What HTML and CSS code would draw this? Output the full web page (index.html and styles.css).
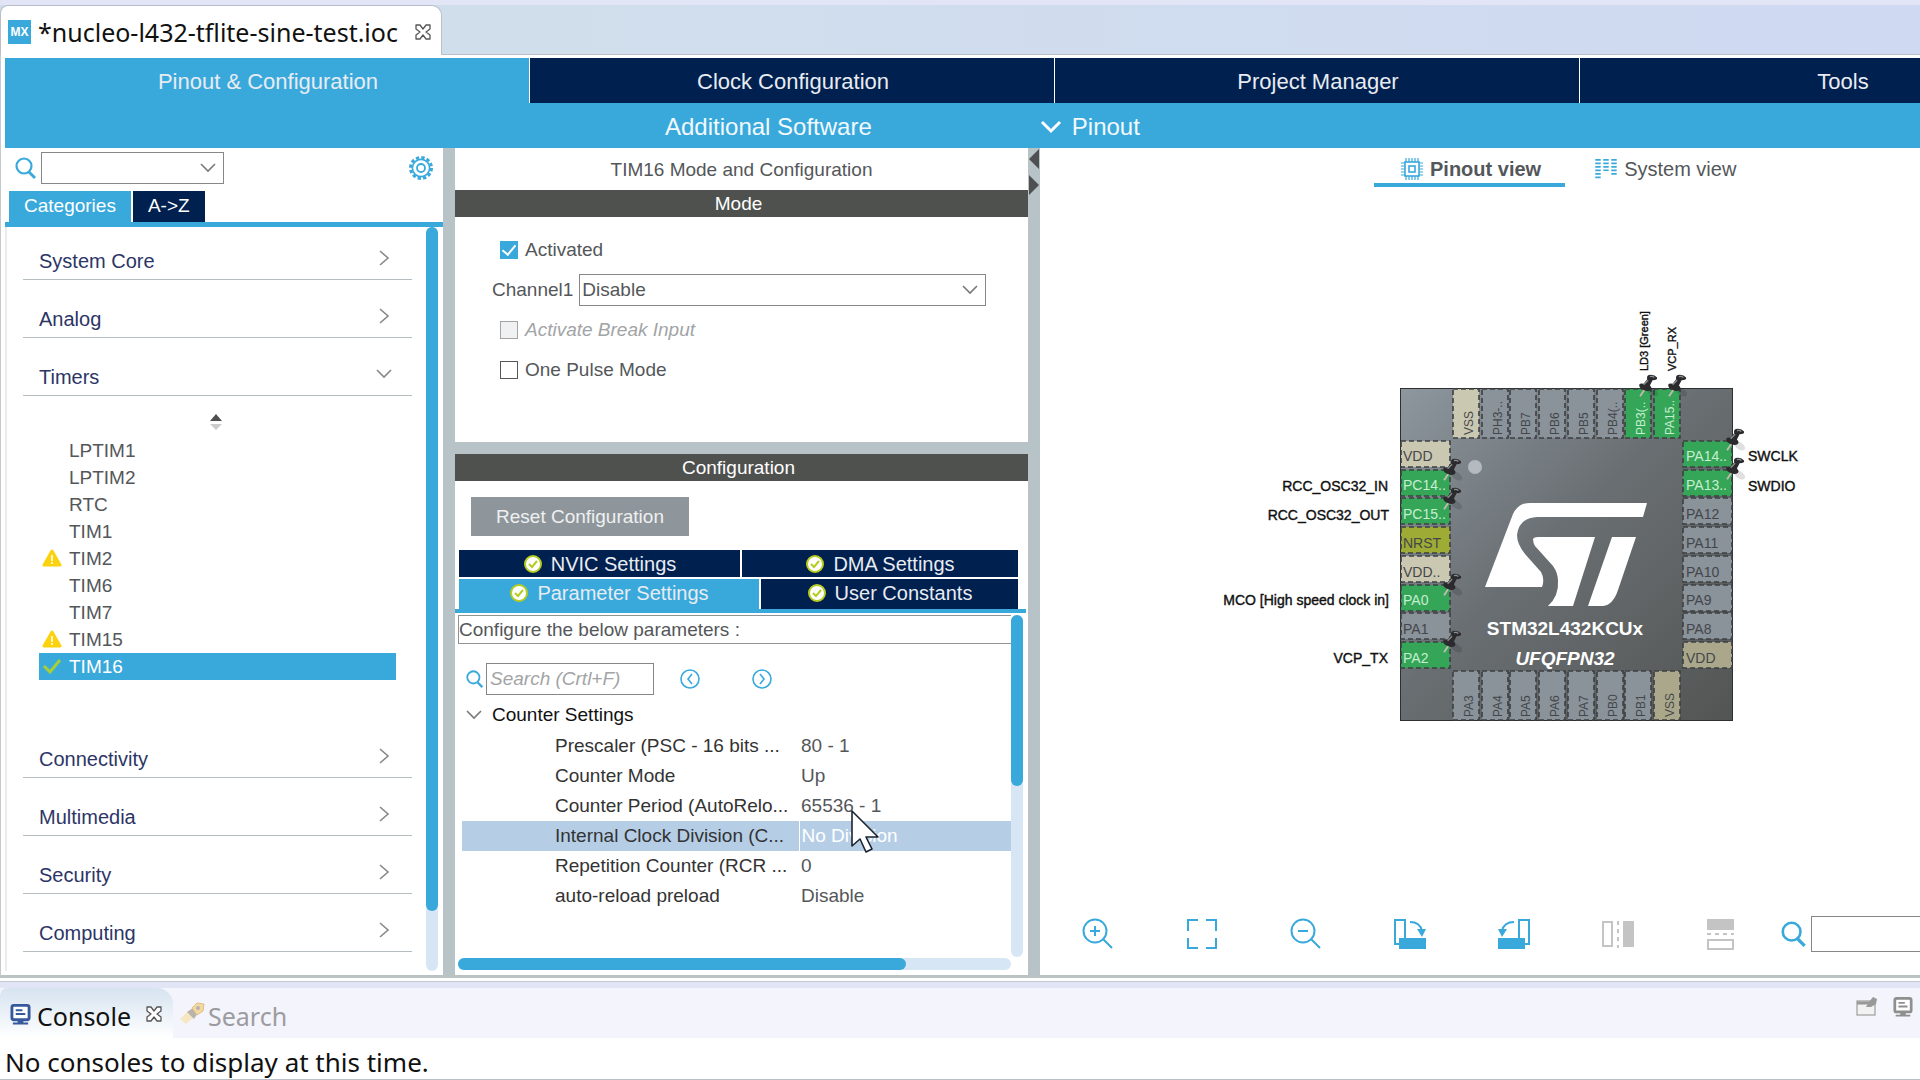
FILE: index.html
```html
<!DOCTYPE html>
<html lang="en">
<head>
<meta charset="utf-8">
<title>nucleo-l432-tflite-sine-test.ioc</title>
<link rel="stylesheet" href="styles.css">
</head>
<body>
<svg class="defs" aria-hidden="true">
  <symbol id="i-search" viewBox="0 0 22 22"><circle cx="9" cy="9" r="7.5" fill="none" stroke="currentColor" stroke-width="2.2"/><path d="M14 15l6 6" stroke="currentColor" stroke-width="2.8"/></symbol>
  <symbol id="i-right" viewBox="0 0 16 16"><path d="M4 1l8 7-8 7" fill="none" stroke="currentColor" stroke-width="1.6"/></symbol>
  <symbol id="i-down" viewBox="0 0 16 16"><path d="M1 4l7 7 7-7" fill="none" stroke="currentColor" stroke-width="1.6"/></symbol>
  <symbol id="i-close" viewBox="0 0 18 18"><path d="M2 2h4l3 4 3-4h4v4l-4 3 4 3v4h-4l-3-4-3 4H2v-4l4-3-4-3z" fill="#fff" stroke="#555" stroke-width="1.3" stroke-linejoin="round"/></symbol>
  <symbol id="i-warn" viewBox="0 0 20 18"><path d="M10 2l8 14H2z" fill="#fcd20f" stroke="#fcd20f" stroke-width="3" stroke-linejoin="round"/><path d="M10 6v6M10 13v2" stroke="#fff" stroke-width="1.6"/></symbol>
  <symbol id="i-ok" viewBox="0 0 20 20"><circle cx="10" cy="10" r="8" fill="#fff" stroke="#b6cc1f" stroke-width="2"/><path d="M6 10l3 3 5-6" fill="none" stroke="#b6cc1f" stroke-width="2"/></symbol>
  <symbol id="i-console" viewBox="0 0 22 22"><rect x="2" y="2" width="18" height="15" rx="2" fill="#fff" stroke="currentColor" stroke-width="3"/><path d="M6 7h7M6 11h10M8 19h6M3 21h16" stroke="currentColor" stroke-width="2"/></symbol>
  <symbol id="i-pin" viewBox="0 0 22 28"><ellipse cx="15" cy="20" rx="7" ry="4" fill="#000" opacity=".12" transform="rotate(35 15 20)"/><path d="M1 25l6-9" stroke="#c4bcb4" stroke-width="2"/><path d="M0 12q1-2 5-1l4-5q-1-4 2-5 6-1 9 3 1 3-5 3l-3 6q3 3 1 5-3 2-8 0-5-2-5-6z" fill="#2b2b2e"/><path d="M5 12l5-5M12 3q3-1 5 1" stroke="#8e8e92" stroke-width="1.4" fill="none"/></symbol>
</svg>

<header class="editor-bar">
  <div class="editor-tab">
    <span class="mx">MX</span>
    <span>*nucleo-l432-tflite-sine-test.ioc</span>
    <button class="plain close" aria-label="Close editor"><svg width="18" height="18"><use href="#i-close"/></svg></button>
  </div>
</header>

<div class="editor">
  <nav class="main-tabs">
    <button class="main-tab active">Pinout &amp; Configuration</button>
    <button class="main-tab">Clock Configuration</button>
    <button class="main-tab">Project Manager</button>
    <button class="main-tab">Tools</button>
  </nav>
  <div class="sub-bar">
    <button class="plain additional">Additional Software</button>
    <button class="plain pinout-menu"><svg width="22" height="14" viewBox="0 0 22 14"><path d="M2 2l9 9 9-9" fill="none" stroke="#fff" stroke-width="3"/></svg>Pinout</button>
  </div>

  <main class="work">
    <aside class="left">
      <div class="finder">
        <svg class="blue" width="22" height="22"><use href="#i-search"/></svg>
        <span class="combo combo-small"><select aria-label="Find peripheral"><option></option></select><svg width="16" height="16"><use href="#i-down"/></svg></span>
        <button class="plain gear" aria-label="Settings"><svg width="26" height="26" viewBox="0 0 26 26" fill="none" stroke="#39a9dc"><circle cx="13" cy="13" r="10.5" stroke-width="3" stroke-dasharray="3.3 2.2"/><circle cx="13" cy="13" r="8.6" stroke-width="1.6"/><circle cx="13" cy="13" r="4" stroke-width="1.8"/></svg></button>
      </div>
      <div class="cat-tabs"><button class="cat active">Categories</button><button class="cat">A-&gt;Z</button></div>
      <div class="tree-wrap">
        <div class="tree">
          <button class="group">System Core<svg width="16" height="16"><use href="#i-right"/></svg></button>
          <button class="group">Analog<svg width="16" height="16"><use href="#i-right"/></svg></button>
          <button class="group">Timers<svg width="16" height="16"><use href="#i-down"/></svg></button>
          <div class="sorter"><svg width="12" height="16" viewBox="0 0 12 16"><path d="M6 0l6 7H0z" fill="#4d4f50"/><path d="M6 16l6-6H0z" fill="#c9cbcc"/></svg></div>
          <ul class="items">
            <li>LPTIM1</li>
            <li>LPTIM2</li>
            <li>RTC</li>
            <li>TIM1</li>
            <li><svg width="20" height="18"><use href="#i-warn"/></svg>TIM2</li>
            <li>TIM6</li>
            <li>TIM7</li>
            <li><svg width="20" height="18"><use href="#i-warn"/></svg>TIM15</li>
            <li class="selected"><svg width="20" height="18" viewBox="0 0 20 18"><path d="M2 9l6 6L18 3" fill="none" stroke="#a6ce39" stroke-width="3"/></svg>TIM16</li>
          </ul>
          <button class="group">Connectivity<svg width="16" height="16"><use href="#i-right"/></svg></button>
          <button class="group">Multimedia<svg width="16" height="16"><use href="#i-right"/></svg></button>
          <button class="group">Security<svg width="16" height="16"><use href="#i-right"/></svg></button>
          <button class="group">Computing<svg width="16" height="16"><use href="#i-right"/></svg></button>
        </div>
        <div class="vbar"><div class="thumb tree-thumb"></div></div>
      </div>
    </aside>

    <section class="middle">
      <div class="mode">
        <h1>TIM16 Mode and Configuration</h1>
        <h2>Mode</h2>
        <div class="mode-form">
          <label class="check"><input type="checkbox" checked>Activated</label>
          <div class="channel"><label for="ch1">Channel1</label><span class="combo"><select id="ch1"><option>Disable</option></select><svg width="16" height="16"><use href="#i-down"/></svg></span></div>
          <label class="check off"><input type="checkbox" disabled>Activate Break Input</label>
          <label class="check"><input type="checkbox">One Pulse Mode</label>
        </div>
      </div>
      <div class="config">
        <h2>Configuration</h2>
        <button class="reset">Reset Configuration</button>
        <div class="set-tabs">
          <div class="set-row"><button class="set nvic"><svg width="20" height="20"><use href="#i-ok"/></svg>NVIC Settings</button><button class="set"><svg width="20" height="20"><use href="#i-ok"/></svg>DMA Settings</button></div>
          <div class="set-row tall"><button class="set params active"><svg width="20" height="20"><use href="#i-ok"/></svg>Parameter Settings</button><button class="set"><svg width="20" height="20"><use href="#i-ok"/></svg>User Constants</button></div>
        </div>
        <div class="params-wrap">
          <div class="params-body">
            <p class="hint">Configure the below parameters :</p>
            <div class="param-search">
              <svg class="blue" width="18" height="18"><use href="#i-search"/></svg>
              <input type="text" placeholder="Search (Crtl+F)" aria-label="Search parameters">
              <button class="plain step" aria-label="Previous"><svg width="22" height="22" viewBox="0 0 22 22" fill="none" stroke="#39a9dc" stroke-width="1.6"><circle cx="11" cy="11" r="9"/><path d="M13 6l-4 5 4 5"/></svg></button>
              <button class="plain step" aria-label="Next"><svg width="22" height="22" viewBox="0 0 22 22" fill="none" stroke="#39a9dc" stroke-width="1.6"><circle cx="11" cy="11" r="9"/><path d="M9 6l4 5-4 5"/></svg></button>
            </div>
            <button class="plain section"><svg width="16" height="16"><use href="#i-down"/></svg>Counter Settings</button>
            <table class="params-table">
              <tbody>
              <tr><th scope="row">Prescaler (PSC - 16 bits ...</th><td>80 - 1</td></tr>
              <tr><th scope="row">Counter Mode</th><td>Up</td></tr>
              <tr><th scope="row">Counter Period (AutoRelo...</th><td>65536 - 1</td></tr>
              <tr class="current"><th scope="row">Internal Clock Division (C...</th><td>No Division<svg class="cursor" width="30" height="44" viewBox="0 0 30 44"><path d="M2 1v35l8-7 6 13 6-3-6-12h12z" fill="#fff" stroke="#1b2330" stroke-width="1.6" stroke-linejoin="round"/></svg></td></tr>
              <tr><th scope="row">Repetition Counter (RCR ...</th><td>0</td></tr>
              <tr><th scope="row">auto-reload preload</th><td>Disable</td></tr>
              </tbody>
            </table>
          </div>
          <div class="vbar"><div class="thumb params-thumb"></div></div>
        </div>
        <div class="hbar"><div class="thumb"></div></div>
      </div>
    </section>

    <div class="splitter"><svg width="12" height="46" viewBox="0 0 12 46"><path d="M11 0v20L1 10zM1 26v20l10-10z" fill="#4d4f50"/></svg></div>

    <section class="right">
      <div class="views">
        <button class="view active"><svg width="22" height="22" viewBox="0 0 22 22" fill="none" stroke="#39a9dc" stroke-width="1.6"><rect x="4" y="4" width="14" height="14"/><rect x="8" y="8" width="6" height="6"/><path d="M5 0v4M8 0v4M11 0v4M14 0v4M17 0v4M5 18v4M8 18v4M11 18v4M14 18v4M17 18v4M0 5h4M0 8h4M0 11h4M0 14h4M0 17h4M18 5h4M18 8h4M18 11h4M18 14h4M18 17h4" stroke-width="1.2"/></svg>Pinout view</button>
        <button class="view"><svg width="22" height="22" viewBox="0 0 22 22" stroke="#39a9dc" stroke-width="5.4" stroke-dasharray="1.8 1.7"><path d="M3 1v20M11 1v12M19 1v16"/></svg>System view</button>
      </div>
      <div class="canvas">
        <svg class="chip" width="600" height="440" viewBox="-190 -98 600 440">
          <defs>
            <linearGradient id="body" x1="0" y1="0" x2="1" y2="1"><stop offset="0" stop-color="#8d979e"/><stop offset=".45" stop-color="#6a6f73"/><stop offset="1" stop-color="#525553"/></linearGradient>
          </defs>
          <rect x=".5" y=".5" width="332" height="332" fill="url(#body)" stroke="#2d2f31"/>
          <g class="pins">
            <g class="pwr"><rect x="1" y="53" width="49" height="26"/><rect x="1" y="168" width="49" height="26"/><rect x="53" y="1" width="26" height="49"/></g>
            <g class="pwr2"><rect x="283" y="254" width="49" height="26"/><rect x="254" y="283" width="26" height="49"/></g>
            <g class="used"><rect x="1" y="82" width="49" height="26"/><rect x="1" y="110" width="49" height="26"/><rect x="1" y="197" width="49" height="26"/><rect x="1" y="254" width="49" height="26"/><rect x="225" y="1" width="26" height="49"/><rect x="254" y="1" width="26" height="49"/><rect x="283" y="53" width="49" height="26"/><rect x="283" y="82" width="49" height="26"/></g>
            <rect class="rst" x="1" y="139" width="49" height="26"/>
            <g class="free"><rect x="1" y="225" width="49" height="26"/><rect x="82" y="1" width="26" height="49"/><rect x="110" y="1" width="26" height="49"/><rect x="139" y="1" width="26" height="49"/><rect x="168" y="1" width="26" height="49"/><rect x="197" y="1" width="26" height="49"/><rect x="283" y="110" width="49" height="26"/><rect x="283" y="139" width="49" height="26"/><rect x="283" y="168" width="49" height="26"/><rect x="283" y="197" width="49" height="26"/><rect x="283" y="225" width="49" height="26"/><rect x="53" y="283" width="26" height="49"/><rect x="82" y="283" width="26" height="49"/><rect x="110" y="283" width="26" height="49"/><rect x="139" y="283" width="26" height="49"/><rect x="168" y="283" width="26" height="49"/><rect x="197" y="283" width="26" height="49"/><rect x="225" y="283" width="26" height="49"/></g>
          </g>
          <g class="pin-text">
            <text x="3" y="73">VDD</text><text class="lit" x="3" y="102">PC14..</text><text class="lit" x="3" y="131">PC15..</text><text x="3" y="160">NRST</text><text x="3" y="189">VDD..</text><text class="lit" x="3" y="217">PA0</text><text x="3" y="246">PA1</text><text class="lit" x="3" y="275">PA2</text>
            <text class="lit" x="286" y="73">PA14..</text><text class="lit" x="286" y="102">PA13..</text><text x="286" y="131">PA12</text><text x="286" y="160">PA11</text><text x="286" y="189">PA10</text><text x="286" y="217">PA9</text><text x="286" y="246">PA8</text><text x="286" y="275">VDD</text>
          </g>
          <g class="pin-text upright" transform="rotate(-90)">
            <text x="-47" y="73">VSS</text><text x="-47" y="102">PH3-..</text><text x="-47" y="130">PB7</text><text x="-47" y="159">PB6</text><text x="-47" y="188">PB5</text><text x="-47" y="217">PB4(..</text><text class="lit" x="-47" y="245">PB3(..</text><text class="lit" x="-47" y="274">PA15..</text>
            <text x="-329" y="73">PA3</text><text x="-329" y="102">PA4</text><text x="-329" y="130">PA5</text><text x="-329" y="159">PA6</text><text x="-329" y="188">PA7</text><text x="-329" y="217">PB0</text><text x="-329" y="245">PB1</text><text x="-329" y="274">VSS</text>
          </g>
          <g class="labels">
            <g text-anchor="end"><text x="-12" y="103">RCC_OSC32_IN</text><text x="-11" y="132">RCC_OSC32_OUT</text><text x="-11" y="217">MCO [High speed clock in]</text><text x="-12" y="275">VCP_TX</text></g>
            <text x="348" y="73">SWCLK</text><text x="348" y="103">SWDIO</text>
            <g class="upright" transform="rotate(-90)"><text x="17" y="248">LD3 [Green]</text><text x="17" y="276">VCP_RX</text></g>
          </g>
          <circle cx="75" cy="79" r="7" fill="#b4babf"/>
          <g fill="#fff">
            <path d="M85 199L113 126Q118 115 130 115H247L243 129H137Q119 130 117 147Q117 156 125 166L141 184Q145 191 142 199Z"/>
            <path d="M133 151Q134 149 138 149H195L173 218H148Q159 208 158 193Q158 185 153 178L135 158Q133 155 133 151Z"/>
            <path d="M212 149H236L218 202Q213 217 203 218H188Z"/>
            <text class="part" x="165" y="247">STM32L432KCUx</text>
            <text class="part ital" x="165" y="277">UFQFPN32</text>
          </g>
          <g>
            <use href="#i-pin" x="43" y="70" width="20" height="25"/><use href="#i-pin" x="43" y="99" width="20" height="25"/><use href="#i-pin" x="43" y="185" width="20" height="25"/><use href="#i-pin" x="43" y="242" width="20" height="25"/>
            <use href="#i-pin" x="239" y="-14" width="20" height="25"/><use href="#i-pin" x="268" y="-14" width="20" height="25"/><use href="#i-pin" x="326" y="40" width="20" height="25"/><use href="#i-pin" x="326" y="69" width="20" height="25"/>
          </g>
        </svg>
      </div>
      <div class="tools">
        <button class="plain tool" aria-label="Zoom in"><svg viewBox="0 0 32 32" fill="none" stroke="#39a9dc" stroke-width="2"><circle cx="13" cy="13" r="11.5"/><path d="M21 21l9 9M8 13h10M13 8v10"/></svg></button>
        <button class="plain tool" aria-label="Best fit"><svg viewBox="0 0 32 32" fill="none" stroke="#39a9dc" stroke-width="2"><path d="M2 13V2h10M20 2h10v11M30 20v10H20M12 30H2V20"/></svg></button>
        <button class="plain tool" aria-label="Zoom out"><svg viewBox="0 0 32 32" fill="none" stroke="#39a9dc" stroke-width="2"><circle cx="13" cy="13" r="11.5"/><path d="M21 21l9 9M8 13h10"/></svg></button>
        <button class="plain tool" aria-label="Rotate right"><svg viewBox="0 0 32 32" fill="none" stroke="#39a9dc" stroke-width="2"><path d="M11 20V2H1v24h4M16 4q10 0 12 9"/><path d="M5 20h27v11H5z" fill="#39a9dc" stroke="none"/><path d="M23 11h9l-4 8z" fill="#39a9dc" stroke="none"/></svg></button>
        <button class="plain tool" aria-label="Rotate left"><svg viewBox="0 0 32 32" fill="none" stroke="#39a9dc" stroke-width="2"><path d="M21 20V2h10v24h-4M16 4Q6 4 4 13"/><path d="M0 20h27v11H0z" fill="#39a9dc" stroke="none"/><path d="M0 11h9l-5 8z" fill="#39a9dc" stroke="none"/></svg></button>
        <button class="plain tool" aria-label="Flip horizontally"><svg viewBox="0 0 32 32" fill="none" stroke="#c4c4c4" stroke-width="2"><path d="M1 4h9v24H1z"/><path d="M16 3v27" stroke-dasharray="4 4"/><path d="M21 3h11v26H21z" fill="#c4c4c4" stroke="none"/></svg></button>
        <button class="plain tool" aria-label="Flip vertically"><svg viewBox="0 0 32 32" fill="none" stroke="#c4c4c4" stroke-width="2"><path d="M2 22h25v9H2z"/><path d="M1 16h27" stroke-dasharray="4 4"/><path d="M1 1h27v11H1z" fill="#c4c4c4" stroke="none"/></svg></button>
        <div class="pin-search"><svg class="blue" width="26" height="26"><use href="#i-search"/></svg><input type="text" aria-label="Find pin"></div>
      </div>
    </section>
  </main>
</div>

<footer class="console">
  <div class="console-bar">
    <div class="console-tab active"><svg class="navy" width="21" height="22"><use href="#i-console"/></svg><span>Console</span><button class="plain close" aria-label="Close console"><svg width="18" height="18"><use href="#i-close"/></svg></button></div>
    <div class="console-tab"><svg width="26" height="24" viewBox="0 0 26 24"><path d="M1 17l8-8 6 6-8 7z" fill="#f6e6c4"/><path d="M8 10l6-4 5 5-4 6z" fill="#b9b3ad"/><path d="M13 6l5-5 7 1-1 7-6 4z" fill="#f3d9a0" stroke="#ddbf88"/><circle cx="19" cy="6" r="2" fill="#b9b3ad"/></svg><span>Search</span></div>
    <div class="console-tools">
      <button class="plain" aria-label="Pin console"><svg width="22" height="20" viewBox="0 0 22 20"><rect x="1" y="5" width="18" height="14" fill="#f2f2f2" stroke="#aaa" stroke-width="1.4"/><path d="M1 7h13" stroke="#999" stroke-width="3"/><path d="M10 11l3-5 4-5 4 2-1 5-5 3z" fill="#999"/></svg></button>
      <button class="plain" aria-label="Display console"><svg class="grey" width="20" height="21"><use href="#i-console"/></svg></button>
    </div>
  </div>
  <p class="console-text">No consoles to display at this time.</p>
</footer>
</body>
</html>
```
FILE: styles.css
```css
* { box-sizing: border-box; }
body {
  margin: 0;
  height: 100vh;
  display: flex;
  flex-direction: column;
  overflow: hidden;
  background: #fff;
  color: #54575a;
  font: 19px/24px "Liberation Sans", Arial, sans-serif;
}
button, input, select { font: inherit; color: inherit; border-radius: 0; }
button { cursor: pointer; border: 0; padding: 0; }
h1, h2, p, ul { margin: 0; padding: 0; font-size: inherit; font-weight: normal; }
ul { list-style: none; }
svg { flex: none; display: block; }
.defs { position: absolute; width: 0; height: 0; }
.plain { background: none; display: flex; align-items: center; }
.blue { color: #39a9dc; }
.navy { color: #36599c; }
.grey { color: #8f8f8f; }

/* editor tab strip */
.editor-bar {
  flex: none;
  height: 55px;
  border-top: 5px solid #e2e5f5;
  border-bottom: 1px solid #b9bfc9;
  background: linear-gradient(90deg, #d0deec 30%, #cfd9f2);
  display: flex;
}
.editor-tab {
  display: flex;
  align-items: center;
  height: 50px;
  padding: 2px 9px 0 7px;
  background: #fff;
  border: 1px solid #b9bfc9;
  border-bottom: 0;
  border-radius: 8px 10px 0 0;
  color: #111;
  font: 25px/34px "Noto Sans", "Open Sans", sans-serif;
  width: 442px;
  white-space: nowrap;
}
.mx {
  width: 23px;
  margin-right: 7px;
  background: #39a9dc;
  color: #fff;
  font: bold 12px/24px "Liberation Sans", Arial, sans-serif;
  text-align: center;
}
.close { margin-left: auto; }

/* main navigation */
.editor {
  flex: 1;
  min-height: 0;
  display: flex;
  flex-direction: column;
  padding: 3px 0 0 4px;
  border-left: 1px solid #c5cad0;
  border-bottom: 3px solid #b8c3c2;
}
.main-tabs { display: flex; flex: none; gap: 1px; height: 45px; overflow: hidden; }
.main-tab {
  flex: 0 0 524px;
  padding: 2px 0 0 2px;
  background: #00204f;
  color: #e8ecf2;
  font-size: 22px;
}
.main-tab.active, .cat.active, .set.active { background: #39a9dc; }
.sub-bar {
  flex: none;
  height: 45px;
  padding-top: 2px;
  background: #39a9dc;
  color: #f2f9fd;
  display: flex;
  font-size: 24px;
}
.additional { margin-left: 660px; }
.pinout-menu { margin-left: 168px; gap: 10px; }
.work { flex: 1; min-height: 0; display: flex; }

/* peripheral tree */
.left {
  flex: 0 0 438px;
  display: flex;
  flex-direction: column;
  padding-bottom: 4px;
}
.finder { display: flex; align-items: center; height: 39px; padding: 0 9px 0 10px; gap: 4px; }
.gear { margin-left: auto; }
.combo { position: relative; display: block; height: 32px; width: 332px; }
.combo select {
  appearance: none;
  width: 100%;
  height: 32px;
  padding: 0 2px;
  border: 1px solid #85888b;
  background: #fff;
}
.combo svg { position: absolute; right: 8px; top: 8px; color: #77797b; pointer-events: none; }
.combo-small { width: 183px; }
.cat-tabs { display: flex; gap: 2px; padding: 4px 4px 0; border-bottom: 5px solid #39a9dc; }
.cat { height: 31px; padding: 0 15px 1px; background: #00204f; color: #fff; }
.tree-wrap { flex: 1; display: flex; min-height: 0; border-left: 2px solid #ececec; }
.tree { flex: 1; padding: 5px 14px 0 16px; overflow: hidden; }
.group {
  width: 100%;
  height: 48px;
  margin-bottom: 10px;
  padding: 10px 20px 0 16px;
  display: flex;
  align-items: center;
  justify-content: space-between;
  background: none;
  border-bottom: 1px solid #b5bdc0;
  color: #2c3566;
  font-size: 20px;
}
.group svg { color: #85888b; margin-bottom: 6px; }
.sorter { height: 31px; display: flex; justify-content: center; align-items: center; padding-right: 4px; }
.items { padding: 0 16px 50px; }
.items li {
  position: relative;
  height: 27px;
  padding-left: 30px;
  line-height: 28px;
}
.items svg { position: absolute; left: 3px; top: 4px; }
.items .selected { background: #39a9dc; color: #fff; }

/* scroll bars */
.vbar { flex: 0 0 12px; background: #d6e6f4; border-radius: 6px; }
.thumb { background: #39a9dc; border-radius: 6px; }
.tree-wrap .vbar { margin-right: 5px; }
.tree-thumb { height: 92%; }
.params-thumb { height: 50%; }
.hbar { height: 12px; margin: 0 17px 5px 3px; background: #d6e6f4; border-radius: 6px; }
.hbar .thumb { height: 12px; width: 81%; }

/* mode and configuration */
.middle {
  flex: 0 0 585px;
  display: flex;
  flex-direction: column;
  gap: 12px;
  background: #b8c3c8;
  border-left: 12px solid #b8c3c8;
}
.mode, .config { background: #fff; }
.mode h1 { height: 42px; line-height: 44px; text-align: center; }
h2 { height: 27px; padding-right: 6px; line-height: 27px; background: #4f514f; color: #fff; text-align: center; }
.mode-form { display: grid; grid-auto-rows: 40px; align-items: center; padding: 13px 0 52px 37px; }
.check { display: flex; align-items: center; gap: 7px; padding-left: 8px; }
.check input {
  appearance: none;
  width: 18px;
  height: 18px;
  margin: 0;
  border: 1px solid #55585a;
  background: #fff;
}
.check input:checked { background: #39a9dc; border-color: #39a9dc; display: grid; place-items: center; }
.check input:checked::before {
  content: "";
  width: 6px;
  height: 11px;
  margin-top: -3px;
  border: solid #fff;
  border-width: 0 2px 2px 0;
  rotate: 40deg;
}
.check.off { color: #a2a4a6; font-style: italic; }
.check.off input { background: #f0f1f3; border-color: #a2a4a6; }
.channel { display: flex; align-items: center; gap: 6px; }
.channel .combo { flex: 1; margin-right: 42px; }
.config { flex: 1; min-height: 0; display: flex; flex-direction: column; }
.reset { width: 218px; height: 39px; margin: 16px; flex: none; background: #8f969b; color: #eef0f1; }
.set-tabs {
  padding: 0 8px 0 4px;
  margin: -2px 2px 0 0;
  border-bottom: 4px solid #39a9dc;
  font-size: 20px;
}
.set-row { display: flex; gap: 2px; height: 27px; margin-bottom: 2px; }
.set-row.tall { height: 30px; margin: 0; }
.set {
  flex: 1;
  display: flex;
  align-items: center;
  justify-content: center;
  gap: 8px;
  background: #00204f;
  color: #e8ecf2;
}
.set.nvic { flex: 0 0 281px; }
.tall .set { padding-bottom: 3px; }
.set.params { flex: 0 0 300px; }
.params-wrap { flex: 1; display: flex; min-height: 0; padding: 2px 5px 1px 3px; }
.params-body { flex: 1; min-width: 0; }
.hint { height: 29px; line-height: 28px; border: 1px solid #909396; border-right: 0; white-space: pre; }
.param-search { display: flex; align-items: center; padding: 19px 8px 4px; gap: 2px; }
.param-search input { width: 168px; height: 32px; padding: 0 3px; border: 1px solid #85888b; }
.param-search input::placeholder { color: #a2a4a6; font-style: italic; opacity: 1; }
.step { margin-left: 23px; margin-right: 25px; }
.section { height: 32px; gap: 10px; padding-left: 8px; color: #111; }
.section svg { color: #77797b; }
.params-table {
  width: calc(100% - 4px);
  margin-left: 4px;
  border-collapse: collapse;
  table-layout: fixed;
}
.params-table th, .params-table td {
  height: 30px;
  padding: 0;
  font-weight: normal;
  text-align: left;
  white-space: nowrap;
}
.params-table th { width: 337px; padding-left: 93px; color: #333; }
.params-table td { position: relative; padding-left: 2px; }
.current { background: #b5cee6; }
.current td { color: #fff; border-left: 1px solid #fff; }
.cursor { position: absolute; left: 50px; top: -11px; }

/* chip view */
.splitter { flex: 0 0 12px; padding-top: 1px; background: #b8c3c8; }
.right { flex: 1; min-width: 0; display: flex; flex-direction: column; background: #fff; }
.views { display: flex; padding-left: 334px; gap: 20px; }
.view {
  display: flex;
  align-items: center;
  gap: 7px;
  height: 39px;
  padding: 7px 10px 0;
  background: none;
  font-size: 20px;
  border-bottom: 4px solid transparent;
}
.view.active { padding: 7px 24px 0 27px; font-weight: bold; border-color: #39a9dc; }
.canvas { flex: 1; min-height: 0; display: flex; align-items: center; padding: 0 0 60px 170px; }
.pins { stroke: #3d4043; stroke-width: 1.6; stroke-dasharray: 5 3; }
.pwr { fill: #cbc8b2; }
.pwr2 { fill: #aaa78b; }
.used { fill: #35a557; }
.rst { fill: #9eab34; }
.free { fill: #8a929a; }
.pin-text { font-size: 14px; fill: #44474a; }
.pin-text .lit { fill: #c5efd0; }
.labels { font-size: 14px; fill: #111; stroke: #111; stroke-width: .4; }
.upright { font-size: 12px; }
.labels .upright { font-size: 11px; }
.part { font-size: 19px; font-weight: bold; text-anchor: middle; }
.ital { font-style: italic; }
.tools { display: flex; align-items: center; height: 82px; padding-left: 42px; gap: 72px; overflow: hidden; }
.tool, .tool svg { width: 32px; height: 32px; flex: none; }
.pin-search { display: flex; align-items: center; gap: 4px; margin-left: -29px; flex: none; }
.pin-search input { width: 180px; height: 36px; border: 1px solid #85888b; }

/* console view */
.console { flex: none; border-bottom: 1px solid #b9bfc9; margin-top: 3px; border-top: 1px solid #c3c8cc; font: 25px/34px "Noto Sans", "Open Sans", sans-serif; }
.console-bar { display: flex; height: 56px; border-top: 6px solid #e2e5f5; background: #f3f4fc; }
.console-tab { display: flex; align-items: center; gap: 3px; padding: 6px 6px 0; color: #9c9ca0; }
.console-tab svg { margin-bottom: 4px; }
.console-tab.active {
  width: 173px;
  padding: 6px 10px 0;
  gap: 6px;
  background: linear-gradient(#d6e3f0, #fff);
  border-radius: 8px 16px 0 0;
  color: #111;
}
.console-tools { display: flex; gap: 15px; margin-left: auto; padding: 8px 7px 0 0; align-items: flex-start; }
.console-text { height: 41px; padding-left: 5px; font-size: 26px; line-height: 48px; color: #111; }
```
